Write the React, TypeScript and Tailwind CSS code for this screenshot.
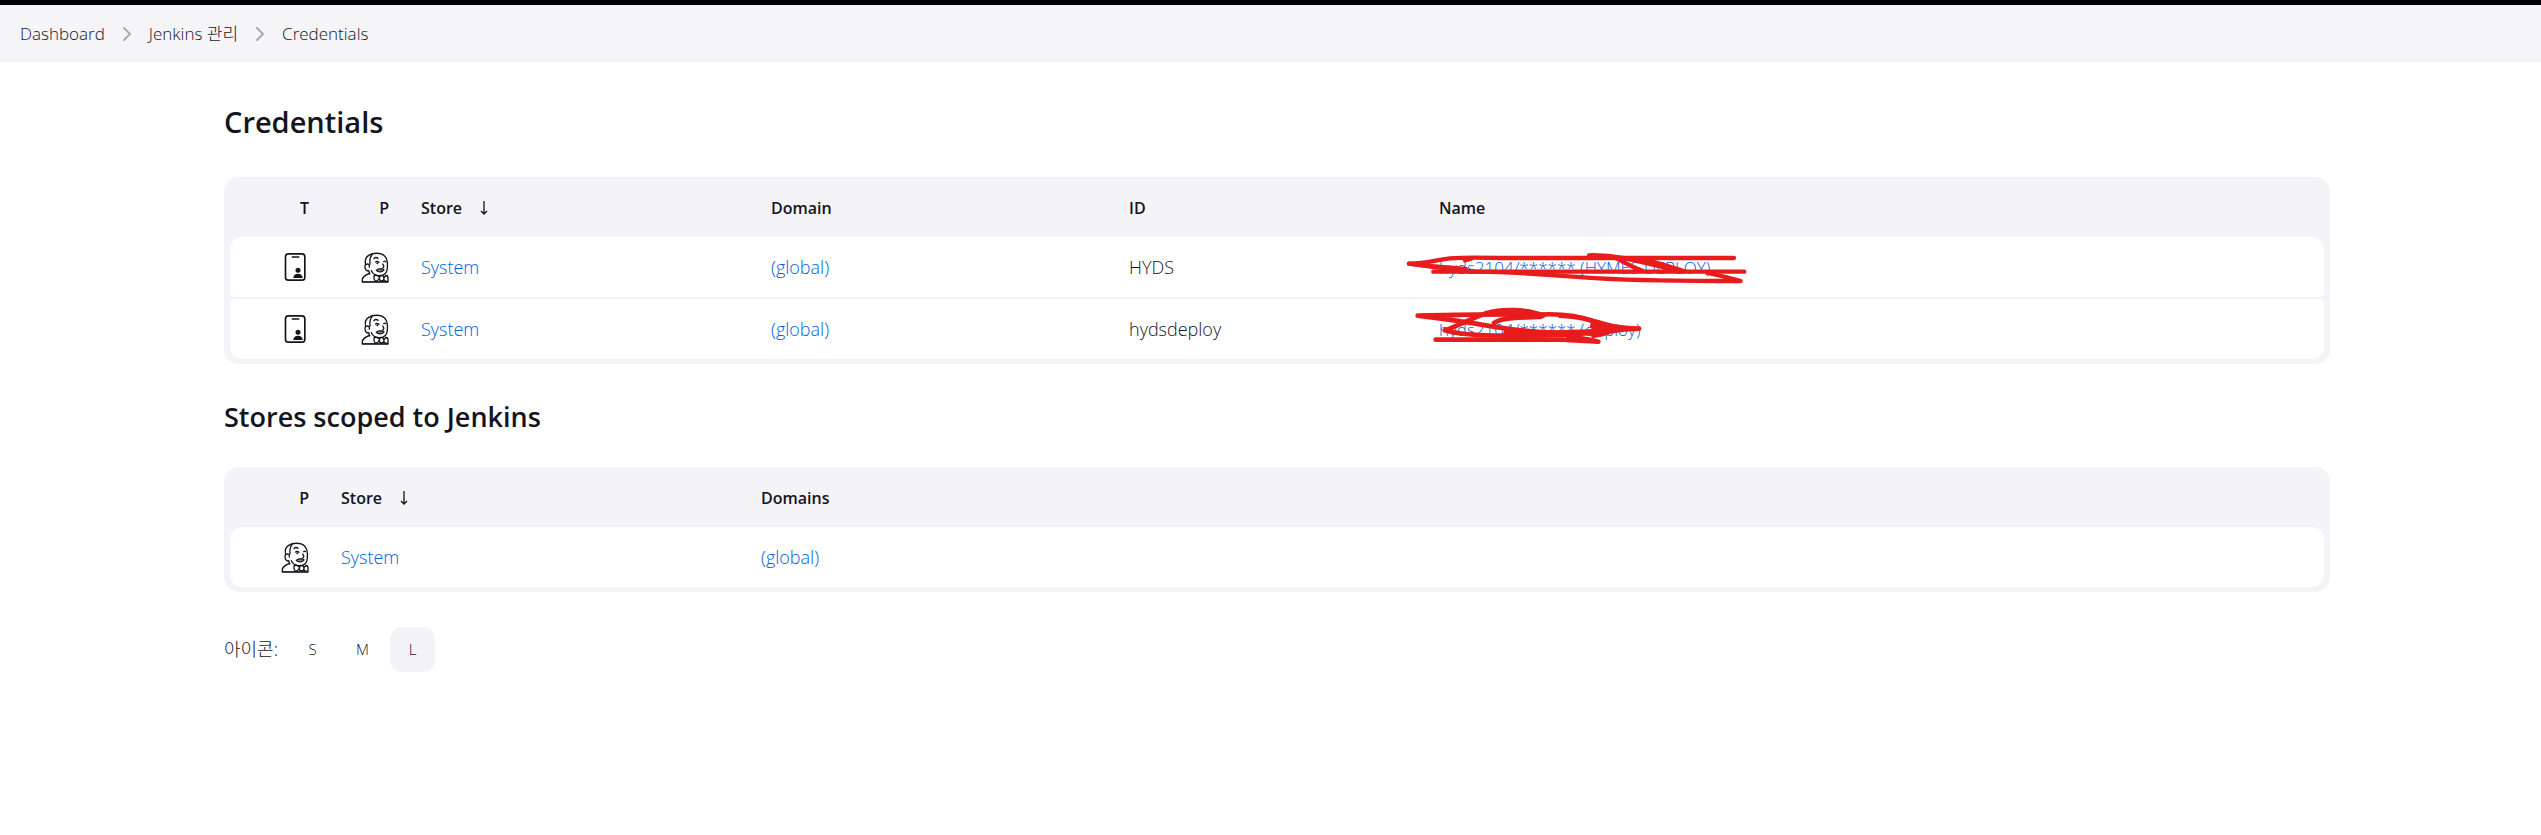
import * as React from "react"
import { clsx } from "clsx"

const credentials = [
  { id: "HYDS", name: "hyds2104/****** (HYMES DEPLOY)" },
  { id: "hydsdeploy", name: "hyds2104/****** (deploy)" },
]

const sizes = ["S", "M", "L"]

function Chevron() {
  return (
    <svg className="h-[14px] w-2" viewBox="0 0 8 14" fill="none" stroke="#a9a9b8" strokeWidth="2" strokeLinecap="round" strokeLinejoin="round">
      <path d="M1 1l6 6-6 6" />
    </svg>
  )
}

function CredentialIcon() {
  return (
    <svg className="ml-auto h-7 w-7" viewBox="0 0 84 84" fill="none" stroke="#14141f" strokeWidth="5" strokeLinecap="round">
      <rect x="13.5" y="2.5" width="58" height="79" rx="9" />
      <path d="M34 12h19" />
      <g fill="#14141f" stroke="none">
        <circle cx="51" cy="52" r="7.5" />
        <path d="M37 75c0-8 5-13 14-13s14 5 14 13z" />
      </g>
    </svg>
  )
}

function JenkinsIcon() {
  return (
    <svg className="ml-auto h-[31px] w-7" viewBox="0 0 84 93" fill="none" stroke="#14141f" strokeWidth="4" strokeLinecap="round" strokeLinejoin="round">
      <path d="M14 37c-3-11 0-21 9-27 12-8 36-9 47 1 9 8 10 24 9 36 0 14-9 23-23 24-11 0-21-6-25-15" />
      <path d="M33 8c-7 7-7 18-6 28M14 37c-5 7-1 20 7 20M16 37c6-3 10 1 9 8M23 56l3 10" />
      <path d="M39 20c2-4 8-5 12-1" />
      <circle cx="49" cy="34" r="3" fill="#14141f" stroke="none" />
      <path d="M44 30c3-3 8-2 10 1M68 29c2-2 4-2 6 0M65 36c3 5 6 9 0 12" />
      <path d="M46 55c4-5 10-5 15-4 4-1 7 0 8 3-4 6-17 8-23 1z" fill="#14141f" fillOpacity=".5" />
      <path d="M26 64C14 69 4 73 4 84v6h77V78c0-5-3-8-7-8" />
      <path d="M54 74c-5-4-12-5-15-2-1 6 1 12 4 16 5 0 9-4 12-8" />
      <ellipse cx="62" cy="79" rx="7" ry="8" />
      <path d="M70 75c3-3 6-4 8-3M69 84c3 2 6 4 9 4" />
      <path d="M4 89h77" strokeOpacity=".6" />
    </svg>
  )
}

function LongScribble() {
  return (
    <svg className="pointer-events-none absolute top-[14px] -left-[18px] h-[34px] w-[345px]" viewBox="75 48 1035 102" fill="none" stroke="#e81c1c" strokeWidth="13" strokeLinecap="round" strokeLinejoin="round">
      <path d="M1062 69H360c-70-2-110-2-150 1-50 6-70 15-123 16 80 10 150 22 210 24 120 0 240 14 360 20 110 6 200 8 425 8-40-12-70-18-100-24" />
      <path d="M160 110h933M627 61c60-2 110 8 150 18 60 14 100 26 140 30M710 70c25 14 50 28 80 38M87 86c50 8 110 10 170 16M255 76l20-6" />
      <path d="M790 78c40 4 70 16 110 28" strokeWidth="16" />
    </svg>
  )
}

function ShortScribble() {
  return (
    <svg className="pointer-events-none absolute top-2 -left-[10px] h-[38px] w-[230px]" viewBox="99 216 690 114" fill="none" stroke="#e81c1c" strokeWidth="14" strokeLinecap="round" strokeLinejoin="round">
      <path d="M113 242c130-3 250-5 360-3 60-4 120 2 170 20 40 12 70 20 134 22-80 4-160 10-250 12-90-2-150-12-210-22-70-12-130-20-204-29z" />
      <path d="M490 242c-50-22-130-20-170-8-50 18-80 36-126 52 40 12 90 16 180 16 120 2 220-4 300-12M342 264c30-20 90-14 140-20" />
      <path d="M167 314h380l108 6c-30-8-60-12-90-14M540 242c70 2 110 20 160 40-10 14-40 18-60 20" />
      <path d="M380 294c60 6 120 4 200 0M400 243h80M640 272l80 10-80 10" strokeWidth="20" />
    </svg>
  )
}

function Link({ children, className }: { children: React.ReactNode; className?: string }) {
  return (
    <a href="#" className={clsx("text-[#0062e0]", className)}>
      {children}
    </a>
  )
}

function Th({ children, className }: { children: React.ReactNode; className?: string }) {
  return <th className={clsx("h-14 px-4 pt-[2px] pb-0 text-left text-[16px] font-semibold text-[#14141f]", className)}>{children}</th>
}

function SortedBy({ children }: { children: React.ReactNode }) {
  return (
    <button type="button" className="flex items-center gap-[18px]">
      {children}
      <svg className="h-[14px] w-2" viewBox="0 0 8 14" fill="none" stroke="#14141f" strokeWidth="1.3">
        <path d="M4 0v13M1 10l3 3 3-3" />
      </svg>
    </button>
  )
}

function DataTable({ children }: { children: React.ReactNode }) {
  return (
    <div className="rounded-[15px] bg-[#f3f3f8] px-[6px] pb-[3px]">
      <table className="w-full table-fixed border-separate border-spacing-x-0 border-spacing-y-[2px]">{children}</table>
    </div>
  )
}

const cell = "h-[60px] bg-white px-4 py-0"

export default function App() {
  const [size, setSize] = React.useState("L")

  return (
    <div className="min-h-screen bg-white font-['Open_Sans','Noto_Sans_CJK_KR',sans-serif] text-[18px] font-light text-[#14141f]">
      <nav className="flex h-[62px] items-center gap-[18px] border-t-[5px] border-black bg-[#f5f5f8] px-5 text-[17px]">
        <a href="#">Dashboard</a>
        <Chevron />
        <a href="#">Jenkins 관리</a>
        <Chevron />
        <a href="#">Credentials</a>
      </nav>

      <main className="pt-10 pr-[211px] pl-56">
        <h1 className="mb-[35px] text-[29px] leading-10 font-semibold">Credentials</h1>
        <DataTable>
          <colgroup>
            <col className="w-[95px]" />
            <col className="w-20" />
            <col className="w-[350px]" />
            <col className="w-[358px]" />
            <col className="w-[310px]" />
            <col />
          </colgroup>
          <thead>
            <tr>
              <Th className="text-right">T</Th>
              <Th className="text-right">P</Th>
              <Th><SortedBy>Store</SortedBy></Th>
              <Th>Domain</Th>
              <Th>ID</Th>
              <Th>Name</Th>
            </tr>
          </thead>
          <tbody>
            {credentials.map((item, index) => {
              const left = index === 0 ? "rounded-tl-xl rounded-bl-sm" : "rounded-tl-sm rounded-bl-xl"
              const right = index === 0 ? "rounded-tr-xl rounded-br-sm" : "rounded-tr-sm rounded-br-xl"
              return (
                <tr key={item.id}>
                  <td className={clsx(cell, left)}><CredentialIcon /></td>
                  <td className={cell}><JenkinsIcon /></td>
                  <td className={cell}><Link>System</Link></td>
                  <td className={cell}><Link>(global)</Link></td>
                  <td className={cell}>{item.id}</td>
                  <td className={clsx(cell, "relative", right)}>
                    <Link className="text-[17px]">{item.name}</Link>
                    {index === 0 ? <LongScribble /> : <ShortScribble />}
                  </td>
                </tr>
              )
            })}
          </tbody>
        </DataTable>

        <h2 className="mt-[33px] mb-[30px] text-[27px] leading-10 font-semibold">Stores scoped to Jenkins</h2>
        <DataTable>
          <colgroup>
            <col className="w-[95px]" />
            <col className="w-[420px]" />
            <col />
          </colgroup>
          <thead>
            <tr>
              <Th className="text-right">P</Th>
              <Th><SortedBy>Store</SortedBy></Th>
              <Th>Domains</Th>
            </tr>
          </thead>
          <tbody>
            <tr>
              <td className={clsx(cell, "rounded-l-xl")}><JenkinsIcon /></td>
              <td className={cell}><Link>System</Link></td>
              <td className={clsx(cell, "rounded-r-xl")}><Link>(global)</Link></td>
            </tr>
          </tbody>
        </DataTable>

        <div className="mt-[35px] flex items-center gap-[5px]">
          <span className="w-[61px]">아이콘:</span>
          {sizes.map((s) => (
            <button
              key={s}
              type="button"
              onClick={() => setSize(s)}
              className={clsx("size-[45px] rounded-xl text-[15px]", s === size && "bg-[#f3f3f8]")}
            >
              {s}
            </button>
          ))}
        </div>
      </main>
    </div>
  )
}
